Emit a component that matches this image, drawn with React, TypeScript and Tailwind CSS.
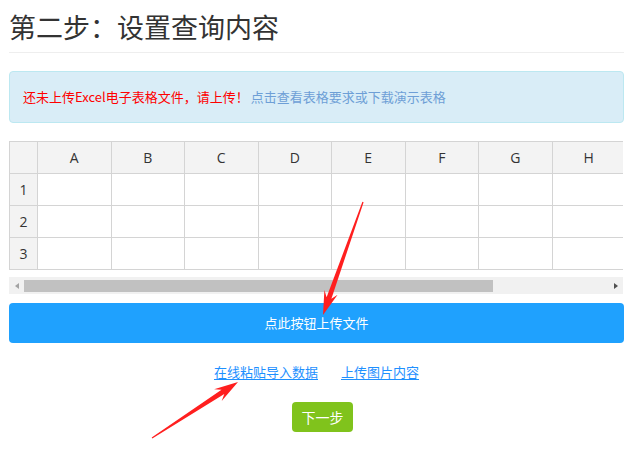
import React from "react";

const cols = ["A", "B", "C", "D", "E", "F", "G", "H"];
const rows = [1, 2, 3];

const cjk = "font-['Noto_Sans_CJK_SC','Noto_Sans',sans-serif]";

function Sheet() {
  return (
    <div className="mt-[18px] w-[614px] overflow-hidden">
      <div className="grid grid-cols-[28px_repeat(7,73.5px)_90px] w-max border-t border-l border-[#d4d4d4] font-['Open_Sans','Noto_Sans',sans-serif] text-[14px] text-[#333]">
        <div className="h-[32px] bg-[#f3f3f3] border-r border-b border-[#d4d4d4]" />
        {cols.map((c) => (
          <div
            key={c}
            className={`h-[32px] bg-[#f3f3f3] border-r border-b border-[#d4d4d4] flex items-center ${
              c === "H" ? "justify-start pl-[31px]" : "justify-center"
            }`}
          >
            {c}
          </div>
        ))}
        {rows.map((r) => (
          <React.Fragment key={r}>
            <div className="h-[32px] bg-[#f3f3f3] border-r border-b border-[#d4d4d4] flex items-center justify-center">
              {r}
            </div>
            {cols.map((c) => (
              <div key={c + r} className="h-[32px] bg-white border-r border-b border-[#d4d4d4]" />
            ))}
          </React.Fragment>
        ))}
      </div>
    </div>
  );
}

function Scrollbar() {
  return (
    <div className="mt-[7px] w-[614px] h-[17px] bg-[#f1f1f1] flex items-center">
      <div className="w-[15px] flex justify-center">
        <div className="w-0 h-0 border-y-[3px] border-y-transparent border-r-[4px] border-r-[#a3a3a3]" />
      </div>
      <div className="w-[469px] h-[12px] bg-[#c1c1c1]" />
      <div className="flex-1" />
      <div className="w-[15px] flex justify-center">
        <div className="w-0 h-0 border-y-[3px] border-y-transparent border-l-[4px] border-l-[#505050]" />
      </div>
    </div>
  );
}

function Arrows() {
  return (
    <svg
      className="absolute inset-0 pointer-events-none"
      width="636"
      height="453"
      viewBox="0 0 636 453"
    >
      <polygon
        fill="#ff1f1f"
        points="363.6,202.2 331.4,298.8 337.6,294.7 323,315 324.4,290.1 326.6,297.2 362.4,201.8"
      />
      <polygon
        fill="#ff1f1f"
        points="152.3,438.4 224.3,393.9 221.7,401.0 238,382 214.1,389.2 221.5,389.7 151.7,437.6"
      />
    </svg>
  );
}

export default function App() {
  return (
    <div className={`relative w-[636px] h-[453px] bg-white overflow-hidden ${cjk}`}>
      <div className="pl-[9px] pr-[12px]">
        <div className="pt-[7px] pb-[5px] border-b border-[#eeeeee]">
          <h1 className="h-[40px] leading-[40px] text-[27px] text-[#333] font-normal">
            第二步：设置查询内容
          </h1>
        </div>

        <div className="mt-[18px] h-[52px] rounded-[4px] border border-[#bce8f1] bg-[#d9edf7] flex items-center pl-[13px] text-[13px]">
          <span className="text-[#ff0000]">还未上传Excel电子表格文件，请上传！</span>
          <span className="ml-[2px] text-[#6e9fd6]">点击查看表格要求或下载演示表格</span>
        </div>

        <Sheet />
        <Scrollbar />

        <button className="mt-[9px] w-full h-[40px] rounded-[4px] bg-[#1fa1fe] text-white text-[13px] flex items-center justify-center">
          点此按钮上传文件
        </button>

        <div className="mt-[19px] h-[20px] flex items-center justify-center gap-[23px] text-[13px] text-[#1e90ff]">
          <a className="underline underline-offset-2">在线粘贴导入数据</a>
          <a className="underline underline-offset-2">上传图片内容</a>
        </div>

        <div className="mt-[20px] flex justify-center">
          <button className="ml-[12px] w-[61px] h-[30px] rounded-[4px] bg-[#80c31c] text-white text-[14px] flex items-center justify-center">
            下一步
          </button>
        </div>
      </div>
      <Arrows />
    </div>
  );
}
